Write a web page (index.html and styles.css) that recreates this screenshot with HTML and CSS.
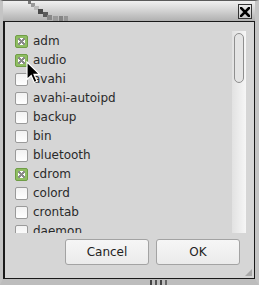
FILE: index.html
```html
<!DOCTYPE html>
<html>
<head>
<meta charset="utf-8">
<link rel="stylesheet" href="styles.css">
</head>
<body>
<div class="window">
  <div class="titlebar">
    <svg class="artifact" width="42" height="20" viewBox="0 0 42 20">
      <rect x="0" y="0" width="3" height="3" fill="#777777"/>
      <rect x="3" y="2" width="4" height="4" fill="#999999"/>
      <rect x="6" y="5" width="5" height="4" fill="#bbbbbb"/>
      <rect x="10" y="8" width="5" height="5" fill="#4a4a4a"/>
      <rect x="15" y="11" width="5" height="5" fill="#5a5a5a"/>
      <rect x="19" y="14" width="5" height="5" fill="#888888"/>
      <rect x="25" y="15" width="5" height="5" fill="#9a9a9a"/>
      <rect x="31" y="15" width="4" height="5" fill="#858585"/>
      <rect x="36" y="15" width="4" height="5" fill="#959595"/>
    </svg>
    <div class="close">
      <svg width="10" height="10" viewBox="0 0 10 10"><path d="M1 1 L9 9 M9 1 L1 9" stroke="#000" stroke-width="2.6" stroke-linecap="square"/></svg>
    </div>
  </div>
  <div class="client">
    <div class="listarea">
      <ul class="list">
        <li class="row"><span class="box checked"></span><span class="label">adm</span></li>
        <li class="row"><span class="box checked"></span><span class="label">audio</span></li>
        <li class="row"><span class="box"></span><span class="label">avahi</span></li>
        <li class="row"><span class="box"></span><span class="label">avahi-autoipd</span></li>
        <li class="row"><span class="box"></span><span class="label">backup</span></li>
        <li class="row"><span class="box"></span><span class="label">bin</span></li>
        <li class="row"><span class="box"></span><span class="label">bluetooth</span></li>
        <li class="row"><span class="box checked"></span><span class="label">cdrom</span></li>
        <li class="row"><span class="box"></span><span class="label">colord</span></li>
        <li class="row"><span class="box"></span><span class="label">crontab</span></li>
        <li class="row"><span class="box"></span><span class="label">daemon</span></li>
      </ul>
      <div class="scrollbar"><div class="thumb"></div></div>
    </div>
    <div class="buttons">
      <button class="btn">Cancel</button>
      <button class="btn">OK</button>
    </div>
    <div class="grip">
      <svg width="7" height="7" viewBox="0 0 7 7"><path d="M7 0 L7 7 L0 7 Z" fill="#a8a8a8"/></svg>
    </div>
    <svg class="cursor" width="15" height="23" viewBox="0 0 15 23">
      <path d="M1 1 L1 18.5 L5.2 14.5 L8.2 21.5 L11 20.3 L8 13.4 L13.6 13.4 Z" fill="#000" stroke="#fff" stroke-width="1.2" stroke-linejoin="miter"/>
    </svg>
  </div>
  <svg class="edgemarks" width="18" height="5" viewBox="0 0 18 5">
    <rect x="0" y="0" width="2" height="5" fill="#444"/>
    <rect x="5" y="0" width="2" height="5" fill="#555"/>
    <rect x="10" y="0" width="2" height="5" fill="#444"/>
    <rect x="15" y="0" width="2" height="5" fill="#666"/>
  </svg>
</div>
</body>
</html>
```

FILE: styles.css
```css
* { box-sizing: border-box; }
html, body { margin: 0; padding: 0; }
body { width: 259px; height: 285px; overflow: hidden; background: #c8c8c8; font-family: "DejaVu Sans", sans-serif; }

.window {
  position: relative;
  width: 259px;
  height: 285px;
  display: flex;
  flex-direction: column;
  background: #cdcdcd;
  border-left: 3px solid #c4c4c4;
  border-right: 4px solid #c4c4c4;
  border-bottom: 6px solid #bdbdbd;
  border-top: 1px solid #5a5a5a;
}

.titlebar {
  height: 20px;
  flex: none;
  display: flex;
  align-items: flex-start;
  background: linear-gradient(#f0f0f0, #d8d8d8 40%, #b0b0b0);
  position: relative;
}
.artifact { margin-left: 25px; flex: none; }
.close {
  margin-left: auto;
  margin-right: 3px;
  margin-top: 3px;
  width: 14px;
  height: 15px;
  border: 1px solid #333;
  background: linear-gradient(#e8e8e8, #c8c8c8);
  display: flex;
  align-items: center;
  justify-content: center;
}

.client {
  flex: 1;
  position: relative;
  background: #d6d6d6;
  border: 1px solid #1a1a1a;
  border-left-width: 2px;
  display: flex;
  flex-direction: column;
  padding: 9px 8px 0 10px;
}

.listarea {
  height: 202px;
  flex: none;
  display: flex;
}
.list {
  list-style: none;
  margin: 0;
  padding: 1px 0 0 0;
  flex: 1;
  overflow: hidden;
}
.row {
  height: 19px;
  display: flex;
  align-items: center;
}
.box {
  width: 13px;
  height: 13px;
  border: 1px solid #9a9a9a;
  border-radius: 2px;
  background: linear-gradient(#f2f2f2, #ffffff);
  margin-right: 5px;
  flex: none;
  position: relative;
}
.box.checked {
  border-color: #6f9d45;
  background: #8fbd62;
}
.box.checked::after {
  content: "";
  position: absolute;
  left: 2px; top: 2px;
  width: 7px; height: 7px;
  border-radius: 1px;
  background:
    linear-gradient(45deg, transparent 40%, #8a8a8a 40%, #8a8a8a 60%, transparent 60%),
    linear-gradient(-45deg, transparent 40%, #8a8a8a 40%, #8a8a8a 60%, transparent 60%),
    #ffffff;
}
.label {
  font-size: 12px;
  color: #2a2a2a;
  line-height: 19px;
  white-space: nowrap;
}

.scrollbar {
  width: 14px;
  flex: none;
  background: linear-gradient(90deg, #e2e2e2, #f6f6f6);
  padding: 2px 2px;
}
.thumb {
  width: 10px;
  height: 50px;
  border: 1px solid #8f8f8f;
  border-radius: 5px;
  background: #e4e4e4;
}

.buttons {
  display: flex;
  justify-content: flex-end;
  gap: 7px;
  margin-top: 6px;
  padding-right: 6px;
}
.btn {
  width: 84px;
  height: 26px;
  border: 1px solid #a3a3a3;
  border-radius: 3px;
  background: linear-gradient(#f6f6f6, #ebebeb);
  font-family: "DejaVu Sans", sans-serif;
  font-size: 12px;
  color: #222;
  padding: 0;
}

.grip {
  position: absolute;
  right: 2px;
  bottom: 2px;
  width: 7px;
  height: 7px;
  line-height: 0;
}
.cursor {
  position: absolute;
  left: 21px;
  top: 39px;
}
.edgemarks {
  position: absolute;
  left: 147px;
  bottom: -6px;
}
```
